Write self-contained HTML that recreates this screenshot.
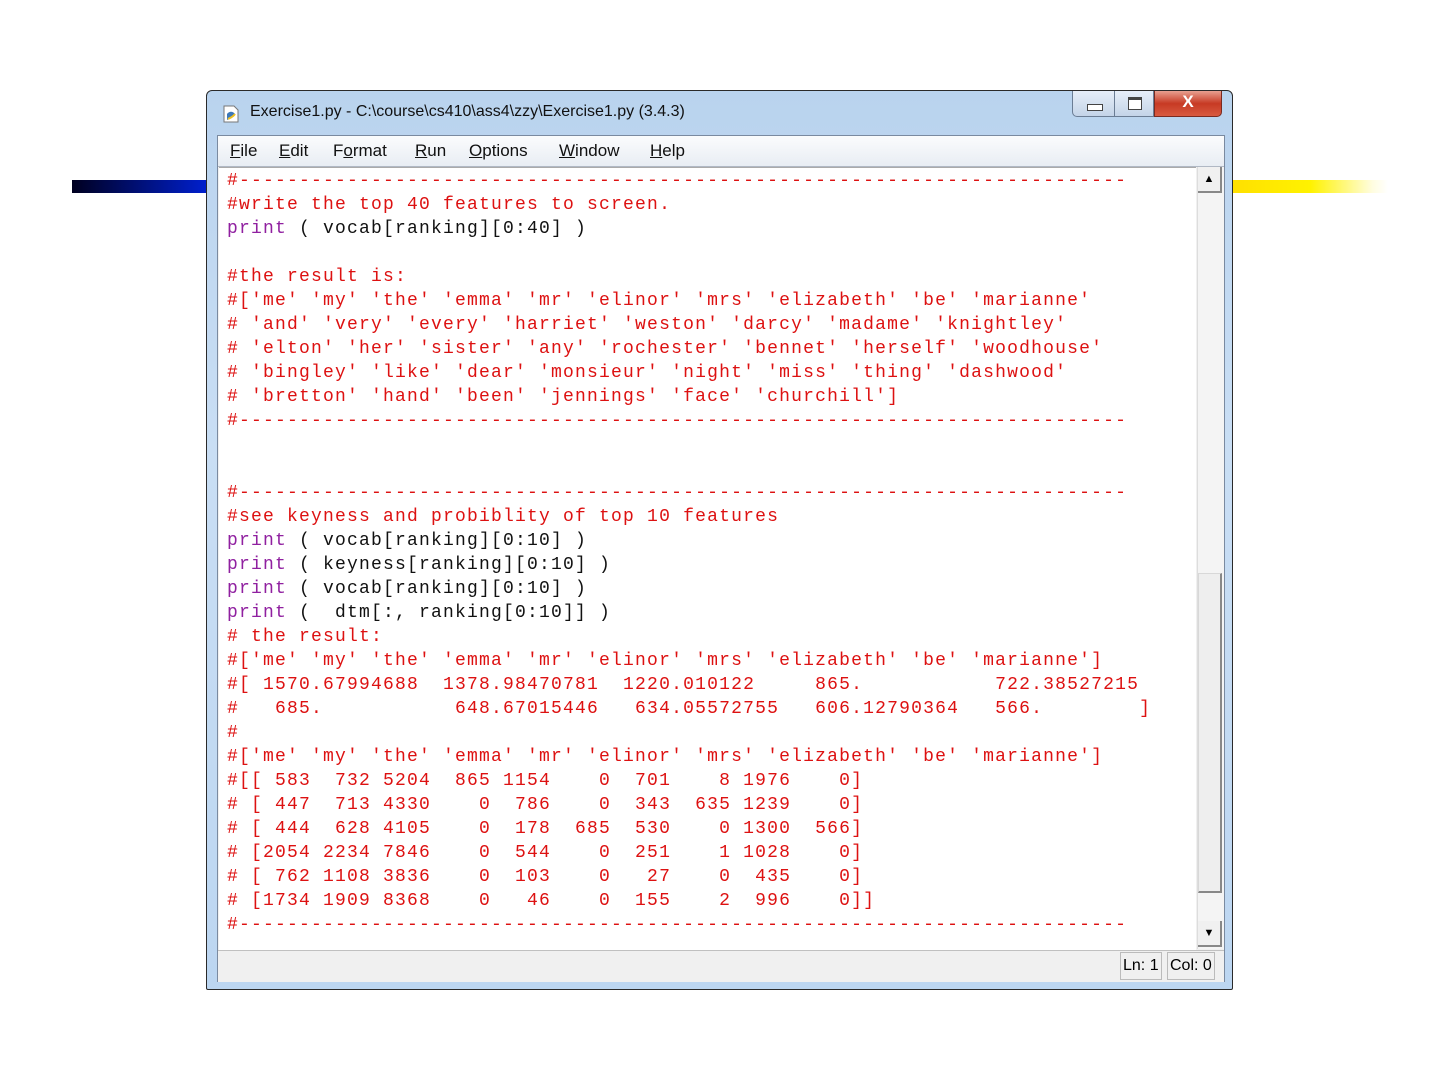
<!DOCTYPE html>
<html><head><meta charset="utf-8"><style>
body{margin:0;width:1440px;height:1080px;background:#fff;position:relative;overflow:hidden;font-family:"Liberation Sans",sans-serif}
.barL{position:absolute;left:72px;top:180px;width:136px;height:13px;background:linear-gradient(90deg,#000020,#0020d0)}
.barR{position:absolute;left:1233px;top:180px;width:155px;height:13px;background:linear-gradient(90deg,#ffe000,#fff200 50%,#fffde0 90%,#fff)}
.win{position:absolute;left:206px;top:90px;width:1027px;height:900px;box-sizing:border-box;border:1px solid #2a2a2a;border-radius:6px 6px 2px 2px;background:linear-gradient(180deg,#b9d3ee,#c9def4 40%,#bcd6f1);}
.title{position:absolute;left:43px;top:12px;font-size:16px;color:#111}
.icon{position:absolute;left:14px;top:13px;width:20px;height:20px}
.btns{position:absolute;right:10px;top:0;height:27px;width:150px}
.b{position:absolute;top:0;height:26px;border:1px solid #6b7d94;border-top:none;box-sizing:border-box;background:linear-gradient(#e6eef8,#c4d4e8)}
.inner{position:absolute;left:10px;top:44px;width:1006px;height:845px;border:1px solid #7a8aa0;background:#f0f0f0}
.menu{position:absolute;left:0;top:0;width:1006px;height:30px;background:linear-gradient(#fbfcfd,#e8edf3);border-bottom:1px solid #b0b8c4;font-size:17px;color:#111}
.menu span{position:absolute;top:5px}
.text{position:absolute;left:1px;top:31px;width:977px;height:782px;background:#fff;border-top:1px solid #aaa;overflow:hidden}
pre{margin:0;position:absolute;left:8px;top:1px;font-family:"Liberation Mono",monospace;font-size:18px;letter-spacing:1.2px;line-height:24px;color:#dd1111}
.k{color:#9020a0}.n{color:#111}
.sb{position:absolute;left:979px;top:31px;width:26px;height:782px;background:#f4f4f4;border-left:1px solid #ddd}
.thumb{position:absolute;left:0;top:406px;width:24px;height:320px;background:#eeeeee;border:1px solid #d8d8d8;border-right:2px solid #888;border-bottom:2px solid #888;box-sizing:border-box}
.arr{position:absolute;left:0;width:24px;height:26px;background:#f0f0f0;border-right:2px solid #888;border-bottom:2px solid #888;box-sizing:border-box;font-size:11px;text-align:center;line-height:24px}
.status{position:absolute;left:0;top:814px;width:1006px;height:31px;background:#f0f0f0;border-top:1px solid #c0c0c0}
.st{position:absolute;top:1px;height:26px;font-size:16px;line-height:26px;border:1px solid #bbb;padding:0 2px;background:#f0f0f0}
</style></head><body>
<div class="barL"></div><div class="barR"></div>
<div class="win">
<svg class="icon" viewBox="0 0 20 20"><path d="M3 2h10l4 4v12H3z" fill="#fff" stroke="#777"/><path d="M6 10c2-3 6-3 8 0-2 2-4 4-8 6z" fill="#3d78b8"/><path d="M7 15c2-1 5-2 7-5" stroke="#f0c020" stroke-width="2" fill="none"/></svg>
<div class="title">Exercise1.py - C:\course\cs410\ass4\zzy\Exercise1.py (3.4.3)</div>
<div class="btns">
<div class="b" style="left:0;width:43px;border-radius:0 0 0 5px"><div style="position:absolute;left:14px;top:13px;width:14px;height:5px;border:1px solid #444;background:#fff"></div></div>
<div class="b" style="left:42px;width:40px"><div style="position:absolute;left:13px;top:6px;width:12px;height:9px;border:1px solid #444;border-top-width:3px;background:#fff"></div></div>
<div class="b" style="left:82px;width:68px;border-radius:0 0 5px 0;background:linear-gradient(#e8a090,#c73a24 50%,#d85a40);border-color:#7a2a20;color:#fff;font-weight:bold;font-size:17px;text-align:center;line-height:22px">X</div>
</div>
<div class="inner">
<div class="menu"><span style="left:12px"><u>F</u>ile</span><span style="left:61px"><u>E</u>dit</span><span style="left:115px">F<u>o</u>rmat</span><span style="left:197px"><u>R</u>un</span><span style="left:251px"><u>O</u>ptions</span><span style="left:341px"><u>W</u>indow</span><span style="left:432px"><u>H</u>elp</span></div>
<div class="text"><pre>#--------------------------------------------------------------------------
#write the top 40 features to screen.
<span class="k">print</span><span class="n"> ( vocab[ranking][0:40] )</span>

#the result is:
#['me' 'my' 'the' 'emma' 'mr' 'elinor' 'mrs' 'elizabeth' 'be' 'marianne'
# 'and' 'very' 'every' 'harriet' 'weston' 'darcy' 'madame' 'knightley'
# 'elton' 'her' 'sister' 'any' 'rochester' 'bennet' 'herself' 'woodhouse'
# 'bingley' 'like' 'dear' 'monsieur' 'night' 'miss' 'thing' 'dashwood'
# 'bretton' 'hand' 'been' 'jennings' 'face' 'churchill']
#--------------------------------------------------------------------------


#--------------------------------------------------------------------------
#see keyness and probiblity of top 10 features
<span class="k">print</span><span class="n"> ( vocab[ranking][0:10] )</span>
<span class="k">print</span><span class="n"> ( keyness[ranking][0:10] )</span>
<span class="k">print</span><span class="n"> ( vocab[ranking][0:10] )</span>
<span class="k">print</span><span class="n"> (  dtm[:, ranking[0:10]] )</span>
# the result:
#['me' 'my' 'the' 'emma' 'mr' 'elinor' 'mrs' 'elizabeth' 'be' 'marianne']
#[ 1570.67994688  1378.98470781  1220.010122     865.           722.38527215
#   685.           648.67015446   634.05572755   606.12790364   566.        ]
#
#['me' 'my' 'the' 'emma' 'mr' 'elinor' 'mrs' 'elizabeth' 'be' 'marianne']
#[[ 583  732 5204  865 1154    0  701    8 1976    0]
# [ 447  713 4330    0  786    0  343  635 1239    0]
# [ 444  628 4105    0  178  685  530    0 1300  566]
# [2054 2234 7846    0  544    0  251    1 1028    0]
# [ 762 1108 3836    0  103    0   27    0  435    0]
# [1734 1909 8368    0   46    0  155    2  996    0]]
#--------------------------------------------------------------------------</pre></div>
<div class="sb"><div class="arr" style="top:0">▲</div><div class="thumb"></div><div class="arr" style="top:754px">▼</div></div>
<div class="status"><div class="st" style="left:902px">Ln: 1</div><div class="st" style="left:949px">Col: 0</div></div>
</div>
</div>
</body></html>
